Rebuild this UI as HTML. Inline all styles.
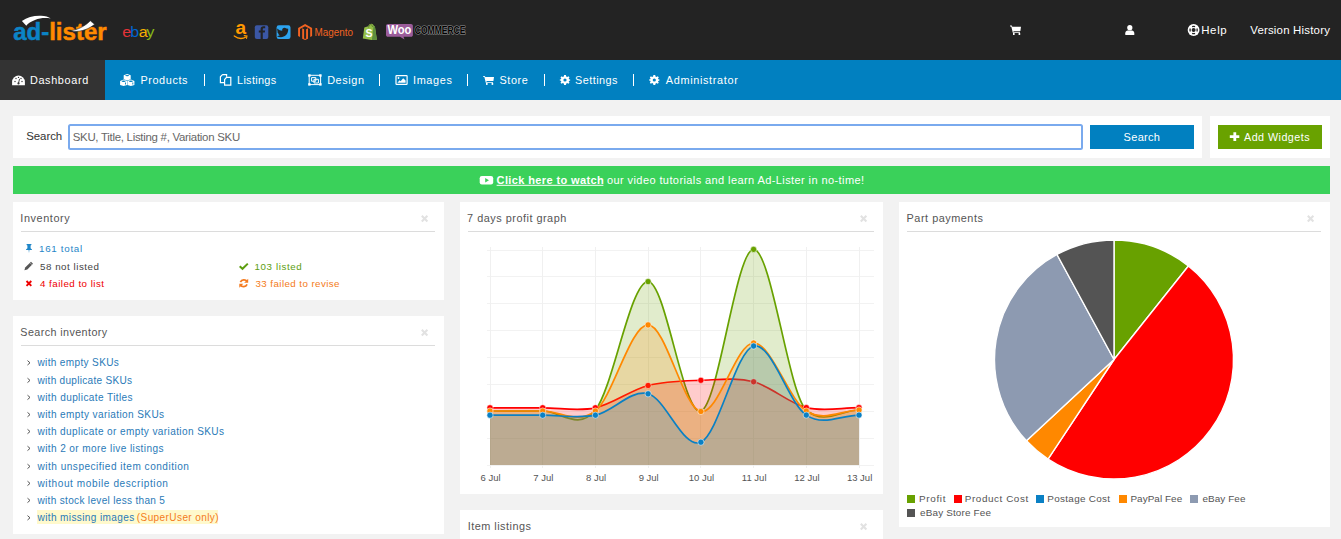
<!DOCTYPE html>
<html><head><meta charset="utf-8"><style>
*{margin:0;padding:0;box-sizing:border-box}
html,body{width:1341px;height:539px;overflow:hidden;background:#f2f2f2;font-family:"Liberation Sans",sans-serif}
.a{position:absolute}
.hdr{position:absolute;left:0;top:0;width:1341px;height:60px;background:#232323}
.nav{position:absolute;left:0;top:60px;width:1341px;height:40px;background:#0180c0}
.act{position:absolute;left:0;top:60px;width:105px;height:40px;background:#333}
.sep{position:absolute;top:74px;width:1px;height:12px;background:#fff}
.pan{position:absolute;background:#fff}
.ul{position:absolute;height:1px;background:#dcdcdc}
</style></head><body>
<div class="hdr"></div>
<div class="nav"></div>
<div class="act"></div>
<div class="sep" style="left:204px"></div>
<div class="sep" style="left:379px"></div>
<div class="sep" style="left:467px"></div>
<div class="sep" style="left:544px"></div>
<div class="sep" style="left:633px"></div>
<div class="pan" style="left:13px;top:116px;width:1189px;height:42px"></div>
<div class="a" style="left:68px;top:124px;width:1015px;height:25.5px;border:2px solid #7aaaee;border-radius:2.5px;background:#fff"></div>
<div class="a" style="left:1090px;top:125px;width:104px;height:24px;background:#0180c0"></div>
<div class="pan" style="left:1210px;top:116px;width:120px;height:42px"></div>
<div class="a" style="left:1218px;top:125px;width:104px;height:24px;background:#69a200"></div>
<div class="a" style="left:13px;top:166px;width:1317px;height:28px;background:#3ad15a"></div>
<div class="pan" style="left:13px;top:202px;width:431px;height:98px"></div>
<div class="ul" style="left:21px;top:231px;width:414px"></div>
<div class="pan" style="left:13px;top:316px;width:431px;height:218px"></div>
<div class="ul" style="left:21px;top:345px;width:414px"></div>
<div class="a" style="left:37px;top:510px;width:181px;height:14px;background:#fff9cc"></div>
<div class="pan" style="left:460px;top:202px;width:423px;height:292px"></div>
<div class="ul" style="left:468px;top:231px;width:406px"></div>
<div class="pan" style="left:460px;top:510px;width:423px;height:40px"></div>
<div class="pan" style="left:899px;top:202px;width:431px;height:325px"></div>
<div class="ul" style="left:907px;top:231px;width:414px"></div>
<svg class="a" style="left:0;top:0" width="480" height="60" viewBox="0 0 480 60">
  <text x="13.2" y="39.8" font-family="Liberation Sans" font-weight="bold" font-size="24.8" textLength="93.4" lengthAdjust="spacingAndGlyphs" stroke-width="0.5"><tspan fill="#0b84c6" stroke="#0b84c6">ad-</tspan><tspan fill="#ff8a00" stroke="#ff8a00">lister</tspan></text>
  <path d="M21.9,20.9 C27,17.5 34,15.5 41,15.8 C45,16 49,17 50.7,18.5 C46,17.8 40,17.8 35,20 C31,21.5 28,23.5 26.3,25.7 Z" fill="#fff"/>
  <path d="M71,30.5 C78,30 85,26 90.3,20.8 L94.6,24.3 C89,29 82,31.6 74,31.4 Z" fill="#fff" stroke="#232323" stroke-width="0.6"/>
  <g font-family="Liberation Sans" font-size="14.6"><text transform="translate(122.3,36.7) scale(1.1,1)" fill="#e53238">e</text><text transform="translate(130.2,36.7) scale(1.1,1)" fill="#0064d2">b</text><text transform="translate(138.8,36.7) scale(1.1,1)" fill="#f5af02">a</text><text transform="translate(146.2,36.7) scale(1.12,1)" fill="#86b817">y</text></g>
</svg>
<svg class="a" style="left:0;top:0" width="1341" height="110" viewBox="0 0 1341 110">
<!-- amazon -->
<text x="235.6" y="34.4" font-family="Liberation Sans" font-weight="bold" font-size="18" fill="#ff9900" textLength="10.6" lengthAdjust="spacingAndGlyphs">a</text>
<path d="M234.3,36 C238,38.8 242.5,39 246,37" fill="none" stroke="#ff9900" stroke-width="1.4" stroke-linecap="round"/>
<path d="M244.2,35.6 L247,35.9 L246.5,38.4" fill="none" stroke="#ff9900" stroke-width="1.1" stroke-linecap="round"/>
<!-- facebook -->
<rect x="254.8" y="25.2" width="13.5" height="13.8" rx="2" fill="#3b57a4"/>
<path d="M262.8,39 V32.6 H264.8 L265.1,30.4 H262.8 V29.2 C262.8,28.6 263.1,28.2 263.8,28.2 H265.2 V26.3 C264.8,26.2 264.2,26.2 263.5,26.2 C261.8,26.2 260.6,27.2 260.6,29 V30.4 H258.8 V32.6 H260.6 V39 Z" fill="#232323"/>
<!-- twitter -->
<rect x="276.6" y="25.2" width="13.9" height="13.8" rx="2.2" fill="#2ca3ef"/>
<path d="M288.2,28.8 C287.8,29 287.3,29.1 286.8,29.2 C287.3,28.9 287.7,28.4 287.9,27.9 C287.4,28.2 286.9,28.4 286.3,28.5 C285.3,27.5 283.6,27.6 282.7,28.6 C282.2,29.2 282,30 282.2,30.7 C280.4,30.6 278.7,29.8 277.5,28.4 C276.9,29.4 277.2,30.8 278.2,31.5 C277.8,31.5 277.5,31.4 277.2,31.2 C277.2,32.3 278,33.2 279,33.4 C278.7,33.5 278.3,33.5 278,33.5 C278.3,34.4 279.1,35 280.1,35 C279.3,35.7 278.2,36 277.1,36 C277,36 276.8,36 276.7,36 C282,39.2 288.3,35.7 288.2,29.6 Z" fill="#232323"/>
<!-- magento -->
<path d="M305.1,24 L312.1,28 V36 L310.2,37.1 V29.1 L305.1,26.2 L300,29.1 V37.1 L298.1,36 V28 Z M306.1,29.3 L308,28.2 V38.7 L305.1,40 L302.2,38.7 V28.2 L304.1,29.3 V38.5 L305.1,39 L306.1,38.5 Z" fill="#f26322"/>
<text x="314.5" y="35.8" font-family="Liberation Sans" font-size="10.6" fill="#f26322" textLength="38.5" lengthAdjust="spacingAndGlyphs">Magento</text>
<!-- shopify -->
<path d="M364.3,27.4 L368.2,26.2 C369,24.4 370.3,23.7 371.4,23.8 C372.4,23.9 373.2,24.6 373.6,25.6 L374.9,26.4 L376.9,39.8 L371.5,40 L362.8,38.4 Z" fill="#95bf47"/>
<path d="M373.6,25.6 L374.9,26.4 L376.9,39.8 L371.9,40 Z" fill="#5e8e3e"/>
<path d="M368.6,27.6 C368.8,25.6 369.8,24.6 370.8,24.6 C371.8,24.6 372.4,25.6 372.5,27" fill="none" stroke="#3d5c26" stroke-width="0.6"/>
<text x="365.6" y="37.2" font-family="Liberation Sans" font-weight="bold" font-size="10.5" fill="#fff">S</text>
<!-- woo -->
<path d="M388,23.9 H411 C412.1,23.9 412.9,24.7 412.9,25.8 V34.9 C412.9,36 412.1,36.8 411,36.8 H403.5 L404.5,39.5 L400,36.8 H388 C386.9,36.8 386,36 386,34.9 V25.8 C386,24.7 386.9,23.9 388,23.9 Z" fill="#9b5c9a"/>
<text x="387.4" y="34.4" font-family="Liberation Sans" font-weight="bold" font-size="12.5" fill="#fff" textLength="24" lengthAdjust="spacingAndGlyphs">Woo</text>
<text x="414.8" y="34.4" font-family="Liberation Sans" font-weight="bold" font-size="11.2" fill="#000" stroke="#9a9a9a" stroke-width="1.2" paint-order="stroke" stroke-linejoin="round" textLength="50.6" lengthAdjust="spacingAndGlyphs">COMMERCE</text>
<!-- header right -->
<g transform="translate(1010.0,25.6) scale(1.0000,1.0444)"><path fill="#fff" d="M0,0 H1.8 L2.3,1 H11 L10.4,5.2 H3.4 L3.6,6 H10 V6.9 H2.8 L1.3,0.9 H0 Z"/>
  <rect x="3" y="7" width="1.6" height="2" fill="#fff"/><rect x="8.6" y="7" width="1.6" height="2" fill="#fff"/></g>
<circle cx="1129.8" cy="27.7" r="2.6" fill="#fff"/>
<path d="M1125.3,35.1 V33.3 C1125.3,31.5 1126.6,30.6 1127.6,30.6 H1132 C1133,30.6 1134.3,31.5 1134.3,33.3 V35.1 Z" fill="#fff"/>
<circle cx="1193.6" cy="30" r="5.9" fill="#fff"/><circle cx="1193.6" cy="30" r="2" fill="#232323"/><path d="M1196.89,28.54 A3.6,3.6 0 0 1 1196.89,31.46 M1195.06,33.29 A3.6,3.6 0 0 1 1192.14,33.29 M1190.31,31.46 A3.6,3.6 0 0 1 1190.31,28.54 M1192.14,26.71 A3.6,3.6 0 0 1 1195.06,26.71 " fill="none" stroke="#232323" stroke-width="1.3"/>
<!-- nav: dashboard -->
<path d="M12.1,85.2 V82 A6.4,6.4 0 0 1 24.9,82 V85.2 Z" fill="#fff"/>
<circle cx="15" cy="81.5" r="0.7" fill="#333"/><circle cx="22" cy="81.5" r="0.7" fill="#333"/><circle cx="16" cy="78.5" r="0.7" fill="#333"/><circle cx="18.5" cy="77.4" r="0.7" fill="#333"/><circle cx="21" cy="78.5" r="0.7" fill="#333"/>
<path d="M18.5,83.2 L19.6,78.8" stroke="#333" stroke-width="0.9"/><circle cx="18.5" cy="83.4" r="1.1" fill="#333"/>
<!-- products cubes -->
<path d="M127.2,73.9 L130.7,75.3 V79.3 L127.2,80.6 L123.7,79.3 V75.3 Z" fill="#fff"/>
<path d="M123.6,79.6 L127.1,81 V85 L123.6,86 L120.1,85 V81 Z" fill="#fff"/>
<path d="M130.9,79.6 L134.4,81 V85 L130.9,86 L127.4,85 V81 Z" fill="#fff"/>
<ellipse cx="127.2" cy="75.6" rx="2" ry="0.7" fill="#0180c0"/>
<ellipse cx="123.6" cy="81.2" rx="2" ry="0.7" fill="#0180c0"/><ellipse cx="130.9" cy="81.2" rx="2" ry="0.7" fill="#0180c0"/>
<path d="M125.5,82.5 V84.5 M132.8,82.5 V84.5" stroke="#0180c0" stroke-width="0.9"/>
<!-- listings files -->
<path d="M222.5,74.6 H226.6 V76.8 M222.5,74.6 L220.4,76.8 V82.6 H224.5" fill="none" stroke="#fff" stroke-width="1.2"/>
<path d="M226.5,77.4 H230.8 V85.2 H224.6 V79.5 Z" fill="none" stroke="#fff" stroke-width="1.2"/>
<!-- design object-group -->
<rect x="309.2" y="75.3" width="11.4" height="9.3" fill="none" stroke="#fff" stroke-width="1"/>
<rect x="308.2" y="74.3" width="2.4" height="2.4" fill="#fff"/><rect x="319.2" y="74.3" width="2.4" height="2.4" fill="#fff"/>
<rect x="308.2" y="83.2" width="2.4" height="2.4" fill="#fff"/><rect x="319.2" y="83.2" width="2.4" height="2.4" fill="#fff"/>
<path d="M311.6,77.6 H315.8 V81.2 H311.6 Z M314,79.3 H318.4 V83 H314 Z" fill="none" stroke="#fff" stroke-width="1"/>
<!-- images -->
<rect x="396" y="75.6" width="11.1" height="8.8" rx="0.6" fill="none" stroke="#fff" stroke-width="1.2"/>
<circle cx="398.5" cy="78" r="0.9" fill="#fff"/>
<path d="M397.4,82.8 L399.6,80.3 L400.6,81.2 L403.2,78.2 L405.6,80.6 V82.8 Z" fill="#fff"/>
<!-- store cart -->
<g transform="translate(483.0,75.9) scale(1.0000,1.0000)"><path fill="#fff" d="M0,0 H1.8 L2.3,1 H11 L10.4,5.2 H3.4 L3.6,6 H10 V6.9 H2.8 L1.3,0.9 H0 Z"/>
  <rect x="3" y="7" width="1.6" height="2" fill="#fff"/><rect x="8.6" y="7" width="1.6" height="2" fill="#fff"/></g>
<!-- settings / admin cogs -->
<g transform="translate(559.8,75.0) scale(1.0000,1.0000)"><path fill="#fff" fill-rule="evenodd" d="M4.3,0 H6.1 L6.4,1.5 L7.4,2 L8.7,1.2 L9.7,2.4 L8.9,3.6 L9.2,4.3 L10.4,4.5 V5.5 L9.2,5.9 L8.9,6.6 L9.7,7.7 L8.6,8.8 L7.4,8 L6.5,8.5 L6.1,10 H4.3 L4,8.5 L3,8 L1.8,8.8 L0.7,7.7 L1.5,6.6 L1.2,5.8 L0,5.5 V4.5 L1.2,4.2 L1.5,3.5 L0.7,2.4 L1.8,1.2 L3,2 L4,1.5 Z M5.2,3.4 A1.6,1.6 0 1 0 5.2,6.6 A1.6,1.6 0 1 0 5.2,3.4 Z"/></g>
<g transform="translate(649.1,75.0) scale(1.0000,1.0000)"><path fill="#fff" fill-rule="evenodd" d="M4.3,0 H6.1 L6.4,1.5 L7.4,2 L8.7,1.2 L9.7,2.4 L8.9,3.6 L9.2,4.3 L10.4,4.5 V5.5 L9.2,5.9 L8.9,6.6 L9.7,7.7 L8.6,8.8 L7.4,8 L6.5,8.5 L6.1,10 H4.3 L4,8.5 L3,8 L1.8,8.8 L0.7,7.7 L1.5,6.6 L1.2,5.8 L0,5.5 V4.5 L1.2,4.2 L1.5,3.5 L0.7,2.4 L1.8,1.2 L3,2 L4,1.5 Z M5.2,3.4 A1.6,1.6 0 1 0 5.2,6.6 A1.6,1.6 0 1 0 5.2,3.4 Z"/></g>
</svg>

<svg class="a" style="left:0;top:0" width="1341" height="539" viewBox="0 0 1341 539" font-family="Liberation Sans">
<line x1="487" y1="250.5" x2="874" y2="250.5" stroke="#f2f2f2" stroke-width="1"/><line x1="487" y1="276.5" x2="874" y2="276.5" stroke="#f2f2f2" stroke-width="1"/><line x1="487" y1="303.5" x2="874" y2="303.5" stroke="#f2f2f2" stroke-width="1"/><line x1="487" y1="330.5" x2="874" y2="330.5" stroke="#f2f2f2" stroke-width="1"/><line x1="487" y1="357.5" x2="874" y2="357.5" stroke="#f2f2f2" stroke-width="1"/><line x1="487" y1="384.5" x2="874" y2="384.5" stroke="#f2f2f2" stroke-width="1"/><line x1="487" y1="411.5" x2="874" y2="411.5" stroke="#f2f2f2" stroke-width="1"/><line x1="487" y1="438.5" x2="874" y2="438.5" stroke="#f2f2f2" stroke-width="1"/><line x1="487" y1="465.5" x2="874" y2="465.5" stroke="#f2f2f2" stroke-width="1"/><line x1="490.5" y1="247" x2="490.5" y2="468" stroke="#f0f0f0" stroke-width="1"/><line x1="542.5" y1="247" x2="542.5" y2="468" stroke="#f0f0f0" stroke-width="1"/><line x1="595.5" y1="247" x2="595.5" y2="468" stroke="#f0f0f0" stroke-width="1"/><line x1="648.5" y1="247" x2="648.5" y2="468" stroke="#f0f0f0" stroke-width="1"/><line x1="700.5" y1="247" x2="700.5" y2="468" stroke="#f0f0f0" stroke-width="1"/><line x1="753.5" y1="247" x2="753.5" y2="468" stroke="#f0f0f0" stroke-width="1"/><line x1="806.5" y1="247" x2="806.5" y2="468" stroke="#f0f0f0" stroke-width="1"/><line x1="859.5" y1="247" x2="859.5" y2="468" stroke="#f0f0f0" stroke-width="1"/><path d="M490.0,411.0 C507.6,411.0 525.1,411.2 542.7,411.0 C560.3,410.8 577.8,431.6 595.4,410.0 C613.0,388.4 630.5,281.4 648.1,281.6 C665.7,281.8 683.3,416.4 700.9,411.0 C718.5,405.6 736.0,249.6 753.6,249.4 C771.2,249.2 788.7,394.2 806.3,410.0 C823.9,425.8 841.4,410.0 859.0,410.0 L859,465 L490,465 Z" fill="#68a100" fill-opacity="0.2" stroke="none"/><path d="M490.0,411.0 C507.6,411.0 525.1,411.2 542.7,411.0 C560.3,410.8 577.8,431.6 595.4,410.0 C613.0,388.4 630.5,281.4 648.1,281.6 C665.7,281.8 683.3,416.4 700.9,411.0 C718.5,405.6 736.0,249.6 753.6,249.4 C771.2,249.2 788.7,394.2 806.3,410.0 C823.9,425.8 841.4,410.0 859.0,410.0" fill="none" stroke="#68a100" stroke-width="1.7"/><circle cx="490" cy="411" r="3.1" fill="#68a100" stroke="rgba(255,255,255,0.55)" stroke-width="1"/><circle cx="542.7" cy="411" r="3.1" fill="#68a100" stroke="rgba(255,255,255,0.55)" stroke-width="1"/><circle cx="595.4" cy="410" r="3.1" fill="#68a100" stroke="rgba(255,255,255,0.55)" stroke-width="1"/><circle cx="648.1" cy="281.6" r="3.1" fill="#68a100" stroke="rgba(255,255,255,0.55)" stroke-width="1"/><circle cx="700.9" cy="411" r="3.1" fill="#68a100" stroke="rgba(255,255,255,0.55)" stroke-width="1"/><circle cx="753.6" cy="249.4" r="3.1" fill="#68a100" stroke="rgba(255,255,255,0.55)" stroke-width="1"/><circle cx="806.3" cy="410" r="3.1" fill="#68a100" stroke="rgba(255,255,255,0.55)" stroke-width="1"/><circle cx="859" cy="410" r="3.1" fill="#68a100" stroke="rgba(255,255,255,0.55)" stroke-width="1"/><path d="M490.0,407.8 C507.6,407.8 525.1,407.8 542.7,407.8 C560.3,407.8 577.8,411.5 595.4,407.8 C613.0,404.1 630.5,390.1 648.1,385.5 C665.7,380.9 683.3,380.9 700.9,380.3 C718.5,379.7 736.0,377.2 753.6,381.8 C771.2,386.4 788.7,403.3 806.3,407.6 C823.9,411.9 841.4,407.6 859.0,407.6 L859,465 L490,465 Z" fill="#ff0000" fill-opacity="0.2" stroke="none"/><path d="M490.0,407.8 C507.6,407.8 525.1,407.8 542.7,407.8 C560.3,407.8 577.8,411.5 595.4,407.8 C613.0,404.1 630.5,390.1 648.1,385.5 C665.7,380.9 683.3,380.9 700.9,380.3 C718.5,379.7 736.0,377.2 753.6,381.8 C771.2,386.4 788.7,403.3 806.3,407.6 C823.9,411.9 841.4,407.6 859.0,407.6" fill="none" stroke="#ff0000" stroke-width="1.7"/><circle cx="490" cy="407.8" r="3.1" fill="#ff0000" stroke="rgba(255,255,255,0.55)" stroke-width="1"/><circle cx="542.7" cy="407.8" r="3.1" fill="#ff0000" stroke="rgba(255,255,255,0.55)" stroke-width="1"/><circle cx="595.4" cy="407.8" r="3.1" fill="#ff0000" stroke="rgba(255,255,255,0.55)" stroke-width="1"/><circle cx="648.1" cy="385.5" r="3.1" fill="#ff0000" stroke="rgba(255,255,255,0.55)" stroke-width="1"/><circle cx="700.9" cy="380.3" r="3.1" fill="#ff0000" stroke="rgba(255,255,255,0.55)" stroke-width="1"/><circle cx="753.6" cy="381.8" r="3.1" fill="#ff0000" stroke="rgba(255,255,255,0.55)" stroke-width="1"/><circle cx="806.3" cy="407.6" r="3.1" fill="#ff0000" stroke="rgba(255,255,255,0.55)" stroke-width="1"/><circle cx="859" cy="407.6" r="3.1" fill="#ff0000" stroke="rgba(255,255,255,0.55)" stroke-width="1"/><path d="M490.0,411.0 C507.6,411.0 525.1,411.0 542.7,411.0 C560.3,411.0 577.8,425.3 595.4,411.0 C613.0,396.6 630.5,324.8 648.1,324.9 C665.7,325.0 683.3,408.5 700.9,411.5 C718.5,414.5 736.0,343.1 753.6,343.0 C771.2,342.9 788.7,399.8 806.3,411.0 C823.9,422.2 841.4,410.3 859.0,410.0 L859,465 L490,465 Z" fill="#ff8800" fill-opacity="0.2" stroke="none"/><path d="M490.0,411.0 C507.6,411.0 525.1,411.0 542.7,411.0 C560.3,411.0 577.8,425.3 595.4,411.0 C613.0,396.6 630.5,324.8 648.1,324.9 C665.7,325.0 683.3,408.5 700.9,411.5 C718.5,414.5 736.0,343.1 753.6,343.0 C771.2,342.9 788.7,399.8 806.3,411.0 C823.9,422.2 841.4,410.3 859.0,410.0" fill="none" stroke="#ff8800" stroke-width="1.7"/><circle cx="490" cy="411" r="3.1" fill="#ff8800" stroke="rgba(255,255,255,0.55)" stroke-width="1"/><circle cx="542.7" cy="411" r="3.1" fill="#ff8800" stroke="rgba(255,255,255,0.55)" stroke-width="1"/><circle cx="595.4" cy="411" r="3.1" fill="#ff8800" stroke="rgba(255,255,255,0.55)" stroke-width="1"/><circle cx="648.1" cy="324.9" r="3.1" fill="#ff8800" stroke="rgba(255,255,255,0.55)" stroke-width="1"/><circle cx="700.9" cy="411.5" r="3.1" fill="#ff8800" stroke="rgba(255,255,255,0.55)" stroke-width="1"/><circle cx="753.6" cy="343" r="3.1" fill="#ff8800" stroke="rgba(255,255,255,0.55)" stroke-width="1"/><circle cx="806.3" cy="411" r="3.1" fill="#ff8800" stroke="rgba(255,255,255,0.55)" stroke-width="1"/><circle cx="859" cy="410" r="3.1" fill="#ff8800" stroke="rgba(255,255,255,0.55)" stroke-width="1"/><path d="M490.0,415.2 C507.6,415.2 525.1,415.2 542.7,415.2 C560.3,415.2 577.8,418.8 595.4,415.2 C613.0,411.6 630.5,389.3 648.1,393.8 C665.7,398.3 683.3,450.2 700.9,442.2 C718.5,434.2 736.0,350.5 753.6,346.0 C771.2,341.5 788.7,403.6 806.3,415.1 C823.9,426.6 841.4,415.1 859.0,415.1 L859,465 L490,465 Z" fill="#0096d2" fill-opacity="0.2" stroke="none"/><path d="M490.0,415.2 C507.6,415.2 525.1,415.2 542.7,415.2 C560.3,415.2 577.8,418.8 595.4,415.2 C613.0,411.6 630.5,389.3 648.1,393.8 C665.7,398.3 683.3,450.2 700.9,442.2 C718.5,434.2 736.0,350.5 753.6,346.0 C771.2,341.5 788.7,403.6 806.3,415.1 C823.9,426.6 841.4,415.1 859.0,415.1" fill="none" stroke="#0a80c4" stroke-width="1.7"/><circle cx="490" cy="415.2" r="3.1" fill="#0a80c4" stroke="rgba(255,255,255,0.55)" stroke-width="1"/><circle cx="542.7" cy="415.2" r="3.1" fill="#0a80c4" stroke="rgba(255,255,255,0.55)" stroke-width="1"/><circle cx="595.4" cy="415.2" r="3.1" fill="#0a80c4" stroke="rgba(255,255,255,0.55)" stroke-width="1"/><circle cx="648.1" cy="393.8" r="3.1" fill="#0a80c4" stroke="rgba(255,255,255,0.55)" stroke-width="1"/><circle cx="700.9" cy="442.2" r="3.1" fill="#0a80c4" stroke="rgba(255,255,255,0.55)" stroke-width="1"/><circle cx="753.6" cy="346" r="3.1" fill="#0a80c4" stroke="rgba(255,255,255,0.55)" stroke-width="1"/><circle cx="806.3" cy="415.1" r="3.1" fill="#0a80c4" stroke="rgba(255,255,255,0.55)" stroke-width="1"/><circle cx="859" cy="415.1" r="3.1" fill="#0a80c4" stroke="rgba(255,255,255,0.55)" stroke-width="1"/><text x="490.6" y="481" text-anchor="middle" font-size="9.5" fill="#545454">6 Jul</text><text x="543.3000000000001" y="481" text-anchor="middle" font-size="9.5" fill="#545454">7 Jul</text><text x="596.0" y="481" text-anchor="middle" font-size="9.5" fill="#545454">8 Jul</text><text x="648.7" y="481" text-anchor="middle" font-size="9.5" fill="#545454">9 Jul</text><text x="701.5" y="481" text-anchor="middle" font-size="9.5" fill="#545454">10 Jul</text><text x="754.2" y="481" text-anchor="middle" font-size="9.5" fill="#545454">11 Jul</text><text x="806.9" y="481" text-anchor="middle" font-size="9.5" fill="#545454">12 Jul</text><text x="859.6" y="481" text-anchor="middle" font-size="9.5" fill="#545454">13 Jul</text>
<path d="M1114,359.5 L1114.00,240.00 A119.5,119.5 0 0 1 1188.39,265.98 Z" fill="#68a100" stroke="#fff" stroke-width="1.4" stroke-linejoin="round"/><path d="M1114,359.5 L1188.39,265.98 A119.5,119.5 0 0 1 1048.04,459.15 Z" fill="#ff0000" stroke="#fff" stroke-width="1.4" stroke-linejoin="round"/><path d="M1114,359.5 L1048.04,459.15 A119.5,119.5 0 0 1 1026.46,440.85 Z" fill="#ff8800" stroke="#fff" stroke-width="1.4" stroke-linejoin="round"/><path d="M1114,359.5 L1026.46,440.85 A119.5,119.5 0 0 1 1056.98,254.48 Z" fill="#8d9ab1" stroke="#fff" stroke-width="1.4" stroke-linejoin="round"/><path d="M1114,359.5 L1056.98,254.48 A119.5,119.5 0 0 1 1114.00,240.00 Z" fill="#545454" stroke="#fff" stroke-width="1.4" stroke-linejoin="round"/>
<rect x="907" y="495" width="8" height="8" fill="#68a100"/><rect x="954" y="495" width="8" height="8" fill="#ff0000"/><rect x="1036" y="495" width="8" height="8" fill="#0a80c4"/><rect x="1119" y="495" width="8" height="8" fill="#ff8800"/><rect x="1190" y="495" width="8" height="8" fill="#8d9ab1"/><rect x="907" y="509" width="8" height="8" fill="#545454"/>
<path d="M421.8,215.8 L427.4,221.4 M427.4,215.8 L421.8,221.4" stroke="#e2e2e2" stroke-width="2.1"/><path d="M421.8,329.8 L427.4,335.4 M427.4,329.8 L421.8,335.4" stroke="#e2e2e2" stroke-width="2.1"/><path d="M860.8,215.8 L866.4,221.4 M866.4,215.8 L860.8,221.4" stroke="#e2e2e2" stroke-width="2.1"/><path d="M860.8,523.8 L866.4,529.4 M866.4,523.8 L860.8,529.4" stroke="#e2e2e2" stroke-width="2.1"/><path d="M1307.8,215.8 L1313.4,221.4 M1313.4,215.8 L1307.8,221.4" stroke="#e2e2e2" stroke-width="2.1"/>
<text x="1201.2" y="34.2" font-size="11.45" letter-spacing="0.667" fill="#fff">Help</text><text x="1250.2" y="34.2" font-size="11.45" letter-spacing="0.2" fill="#fff">Version History</text><text x="29.9" y="83.8" font-size="10.89" letter-spacing="0.638" fill="#fff">Dashboard</text><text x="140.4" y="83.8" font-size="10.89" letter-spacing="0.6" fill="#fff">Products</text><text x="237.0" y="83.8" font-size="10.89" letter-spacing="0.329" fill="#fff">Listings</text><text x="327.2" y="83.8" font-size="10.89" letter-spacing="0.58" fill="#fff">Design</text><text x="413.0" y="83.8" font-size="10.89" letter-spacing="0.64" fill="#fff">Images</text><text x="499.6" y="83.8" font-size="10.89" letter-spacing="0.525" fill="#fff">Store</text><text x="575.1" y="83.8" font-size="10.89" letter-spacing="0.429" fill="#fff">Settings</text><text x="665.8" y="83.8" font-size="10.89" letter-spacing="0.658" fill="#fff">Administrator</text><text x="26.2" y="140" font-size="11.45" letter-spacing="-0.04" fill="#333">Search</text><text x="72.7" y="140.9" font-size="11.45" letter-spacing="-0.277" fill="#666">SKU, Title, Listing #, Variation SKU</text><text x="1123.6" y="140.8" font-size="11.03" letter-spacing="0.3" fill="#fff">Search</text><text x="1244.0" y="141" font-size="10.75" letter-spacing="0.46" fill="#fff">Add Widgets</text><text x="496.6" y="183.7" font-size="11.03" letter-spacing="0.378" fill="#fff" font-weight="bold">Click here to watch</text><text x="607.0" y="183.7" font-size="11.03" letter-spacing="0.402" fill="#fff">our video tutorials and learn Ad-Lister in no-time!</text><text x="20.3" y="222" font-size="10.89" letter-spacing="0.588" fill="#555">Inventory</text><text x="20.3" y="336" font-size="10.75" letter-spacing="0.413" fill="#555">Search inventory</text><text x="467.1" y="221.8" font-size="10.89" letter-spacing="0.506" fill="#555">7 days profit graph</text><text x="906.6" y="222" font-size="10.89" letter-spacing="0.517" fill="#555">Part payments</text><text x="467.7" y="530" font-size="10.89" letter-spacing="0.483" fill="#555">Item listings</text><text x="39.0" y="251.7" font-size="9.78" letter-spacing="0.713" fill="#1f86c8">161 total</text><text x="40.0" y="269.7" font-size="9.78" letter-spacing="0.525" fill="#444">58 not listed</text><text x="40.0" y="286.7" font-size="9.78" letter-spacing="0.467" fill="#ee0000">4 failed to list</text><text x="254.5" y="269.7" font-size="9.78" letter-spacing="0.611" fill="#5d9e10">103 listed</text><text x="255.5" y="286.6" font-size="9.78" letter-spacing="0.417" fill="#f47b20">33 failed to revise</text><text x="37.5" y="366" font-size="10.06" letter-spacing="0.343" fill="#2a7ab8">with empty SKUs</text><text x="37.5" y="383.6" font-size="10.06" letter-spacing="0.289" fill="#2a7ab8">with duplicate SKUs</text><text x="37.5" y="400.6" font-size="10.06" letter-spacing="0.4" fill="#2a7ab8">with duplicate Titles</text><text x="37.5" y="417.8" font-size="10.06" letter-spacing="0.388" fill="#2a7ab8">with empty variation SKUs</text><text x="37.5" y="434.7" font-size="10.06" letter-spacing="0.392" fill="#2a7ab8">with duplicate or empty variation SKUs</text><text x="37.5" y="451.6" font-size="10.06" letter-spacing="0.404" fill="#2a7ab8">with 2 or more live listings</text><text x="37.5" y="469.6" font-size="10.06" letter-spacing="0.503" fill="#2a7ab8">with unspecified item condition</text><text x="37.5" y="486.6" font-size="10.06" letter-spacing="0.592" fill="#2a7ab8">without mobile description</text><text x="37.5" y="503.6" font-size="10.06" letter-spacing="0.315" fill="#2a7ab8">with stock level less than 5</text><text x="37.5" y="521" font-size="10.06" letter-spacing="0.378" fill="#2a7ab8">with missing images</text><text x="136.8" y="521" font-size="10.06" letter-spacing="0.393" fill="#f47b20">(SuperUser only)</text><text x="918.9" y="501.8" font-size="9.92" letter-spacing="0.7" fill="#545454">Profit</text><text x="964.8" y="501.8" font-size="9.92" letter-spacing="0.555" fill="#545454">Product Cost</text><text x="1047.3" y="501.8" font-size="9.92" letter-spacing="0.3" fill="#545454">Postage Cost</text><text x="1130.4" y="501.8" font-size="9.92" letter-spacing="0.067" fill="#545454">PayPal Fee</text><text x="1202.4" y="501.8" font-size="9.92" letter-spacing="0.1" fill="#545454">eBay Fee</text><text x="920.0" y="515.8" font-size="9.92" letter-spacing="0.169" fill="#545454">eBay Store Fee</text><rect x="496.6" y="184.8" width="106.8" height="1" fill="#fff"/>
</svg>
<svg class="a" style="left:0;top:110px" width="1341" height="429" viewBox="0 110 1341 429">
<!-- youtube -->
<rect x="479.7" y="176.1" width="13.5" height="8.4" rx="2.2" fill="#fff"/>
<path d="M485.2,178 L489,180.3 L485.2,182.6 Z" fill="#3ad15a"/>
<!-- plus -->
<path d="M1233.4,132.2 H1236.2 V135.2 H1239.3 V138 H1236.2 V141 H1233.4 V138 H1229.8 V135.2 H1233.4 Z" fill="#fff"/>
<!-- pin -->
<path d="M26.6,243.9 H31.4 V245 L30.6,245.4 V248.2 L32,249.6 V250 H29.4 L29,253 L28.6,250 H26 V249.6 L27.4,248.2 V245.4 L26.6,245 Z" fill="#1f86c8"/>
<!-- pencil -->
<path d="M24.4,270.3 L25.2,267.4 L31,261.8 L33,263.8 L27.3,269.6 Z" fill="#555"/>
<path d="M30,262.8 L32,264.8" stroke="#fff" stroke-width="0.5"/>
<!-- red x -->
<path d="M26.5,281 L31.3,285.8 M31.3,281 L26.5,285.8" stroke="#ee0000" stroke-width="1.9"/>
<!-- check -->
<path d="M239.7,266.2 L242.5,268.8 L247.8,263.6" fill="none" stroke="#5d9e10" stroke-width="2"/>
<!-- refresh -->
<path d="M247.2,281.6 A3.9,3.9 0 0 0 240.4,282.2" fill="none" stroke="#f47b20" stroke-width="1.7"/>
<path d="M248.2,278.8 V282.8 H244.2 Z" fill="#f47b20"/>
<path d="M240.3,284.9 A3.9,3.9 0 0 0 247.1,284.3" fill="none" stroke="#f47b20" stroke-width="1.7"/>
<path d="M239.3,287.7 V283.7 H243.3 Z" fill="#f47b20"/>
<path d="M27.5,360.6 L30,362.8 L27.5,365.0" fill="none" stroke="#555" stroke-width="1"/><path d="M27.5,378.2 L30,380.4 L27.5,382.6" fill="none" stroke="#555" stroke-width="1"/><path d="M27.5,395.2 L30,397.4 L27.5,399.6" fill="none" stroke="#555" stroke-width="1"/><path d="M27.5,412.4 L30,414.6 L27.5,416.8" fill="none" stroke="#555" stroke-width="1"/><path d="M27.5,429.3 L30,431.5 L27.5,433.7" fill="none" stroke="#555" stroke-width="1"/><path d="M27.5,446.2 L30,448.4 L27.5,450.6" fill="none" stroke="#555" stroke-width="1"/><path d="M27.5,464.2 L30,466.4 L27.5,468.6" fill="none" stroke="#555" stroke-width="1"/><path d="M27.5,481.2 L30,483.4 L27.5,485.6" fill="none" stroke="#555" stroke-width="1"/><path d="M27.5,498.2 L30,500.4 L27.5,502.6" fill="none" stroke="#555" stroke-width="1"/><path d="M27.5,515.6 L30,517.8 L27.5,520.0" fill="none" stroke="#555" stroke-width="1"/>
</svg>

</body></html>
